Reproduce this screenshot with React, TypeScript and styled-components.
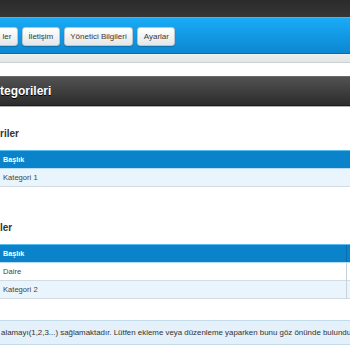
import React from "react";
import styled, { createGlobalStyle } from "styled-components";

const GlobalStyle = createGlobalStyle`
  html, body {
    margin: 0;
    padding: 0;
    background: #fff;
    overflow: hidden;
  }
  body {
    font-family: "Liberation Sans", Arial, sans-serif;
    color: #333;
  }
`;

const menuItems = ["ler", "İletişim", "Yönetici Bilgileri", "Ayarlar"];

function App() {
  return (
    <>
      <GlobalStyle />
      <PageContainer>
        <TopBar />
        <NavBar>
          <NavList>
            {menuItems.map((item) => (
              <NavButton key={item}>{item}</NavButton>
            ))}
          </NavList>
        </NavBar>
        <SubBar />

        <MainContent>
          <PageTitle>tegorileri</PageTitle>

          <SectionTitle>riler</SectionTitle>
          <DataTable>
            <thead>
              <tr>
                <HeadCell>Başlık</HeadCell>
              </tr>
            </thead>
            <tbody>
              <Row $alt>
                <Cell>Kategori 1</Cell>
              </Row>
            </tbody>
          </DataTable>

          <SectionTitle $gap={35}>ler</SectionTitle>
          <DataTable>
            <thead>
              <tr>
                <HeadCell $width={348}>Başlık</HeadCell>
                <HeadCell $divider>Ana Kategori</HeadCell>
              </tr>
            </thead>
            <tbody>
              <Row>
                <Cell>Daire</Cell>
                <Cell $divider>Kategori 1</Cell>
              </Row>
              <Row $alt>
                <Cell>Kategori 2</Cell>
                <Cell $divider>Kategori 1</Cell>
              </Row>
            </tbody>
          </DataTable>

          <InfoBox>
            alamayı(1,2,3...) sağlamaktadır. Lütfen ekleme veya düzenleme
            yaparken bunu göz önünde bulundurunuz.
          </InfoBox>
        </MainContent>
      </PageContainer>
    </>
  );
}

export const PageContainer = styled.div`
  width: 350px;
  height: 350px;
  overflow: hidden;
`;

export const TopBar = styled.div`
  height: 17px;
  background: linear-gradient(#2b2b2b, #363636);
`;

export const NavBar = styled.div`
  box-sizing: border-box;
  height: 37px;
  background: linear-gradient(#1aabf6, #0c87d2);
  border-top: 1px solid #3cbaf5;
  border-bottom: 1px solid #0a6da9;
`;

export const NavList = styled.div`
  display: flex;
  gap: 4px;
  margin-left: -4px;
  padding-top: 9px;
`;

export const NavButton = styled.div`
  height: 19px;
  box-sizing: border-box;
  padding: 0 5.5px;
  display: flex;
  align-items: center;
  white-space: nowrap;
  font-size: 8px;
  color: #3a3a3a;
  background: linear-gradient(#ffffff, #e4e6e8);
  border: 1px solid #b9c6cf;
  border-radius: 3px;
  box-shadow: 0 1px 1px rgba(0, 0, 0, 0.2);
`;

export const SubBar = styled.div`
  height: 8px;
  background: linear-gradient(#eceeef, #e2e5e6);
  border-bottom: 1px solid #cdd1d3;
`;

export const MainContent = styled.div`
  padding-top: 13px;
`;

export const PageTitle = styled.h1`
  margin: 0;
  height: 30px;
  line-height: 29px;
  font-size: 12px;
  font-weight: 700;
  color: #fff;
  white-space: nowrap;
  background: linear-gradient(#525252, #2c2c2c);
  border-top: 1px solid #6a6a6a;
  border-bottom: 1px solid #1c1c1c;
  box-shadow: 0 1px 0 #b0b0b0;
  box-sizing: border-box;
  text-shadow: 0 1px 0 #000;
`;

export const SectionTitle = styled.h2<{ $gap?: number }>`
  margin: ${(p) => p.$gap ?? 22}px 0 10px 0;
  font-size: 10px;
  line-height: 12px;
  font-weight: 700;
  color: #333;
  white-space: nowrap;
`;

export const DataTable = styled.table`
  border-collapse: collapse;
  margin-left: -2px;
  width: 520px;
  table-layout: fixed;
`;

export const HeadCell = styled.th<{ $width?: number; $divider?: boolean }>`
  ${(p) => (p.$width ? `width: ${p.$width}px;` : "")}
  height: 18px;
  box-sizing: border-box;
  padding: 0 0 0 5px;
  text-align: left;
  font-size: 7.2px;
  font-weight: 700;
  color: #fff;
  white-space: nowrap;
  background: #0a83cb;
  border-top: 1px solid #5bbcef;
  border-bottom: 1px solid #b5dcf3;
  ${(p) => (p.$divider ? "border-left: 1px solid #0870ad;" : "")}
`;

export const Row = styled.tr<{ $alt?: boolean }>`
  background: ${(p) => (p.$alt ? "#e9f4fc" : "#ffffff")};
  border-bottom: 1px solid #d3dce2;
`;

export const Cell = styled.td<{ $divider?: boolean }>`
  height: 18px;
  box-sizing: border-box;
  padding: 0 0 0 5px;
  font-size: 7.6px;
  color: #444;
  white-space: nowrap;
  ${(p) => (p.$divider ? "border-left: 1px solid #c9d2d8;" : "")}
`;

export const InfoBox = styled.div`
  margin-top: 21px;
  height: 25px;
  box-sizing: border-box;
  display: flex;
  align-items: center;
  padding-left: 1px;
  width: 520px;
  font-size: 7.9px;
  color: #333;
  white-space: nowrap;
  background: #e4f0fa;
  border-top: 1px solid #c4dbec;
  border-bottom: 1px solid #c4dbec;
`;

export default App;
